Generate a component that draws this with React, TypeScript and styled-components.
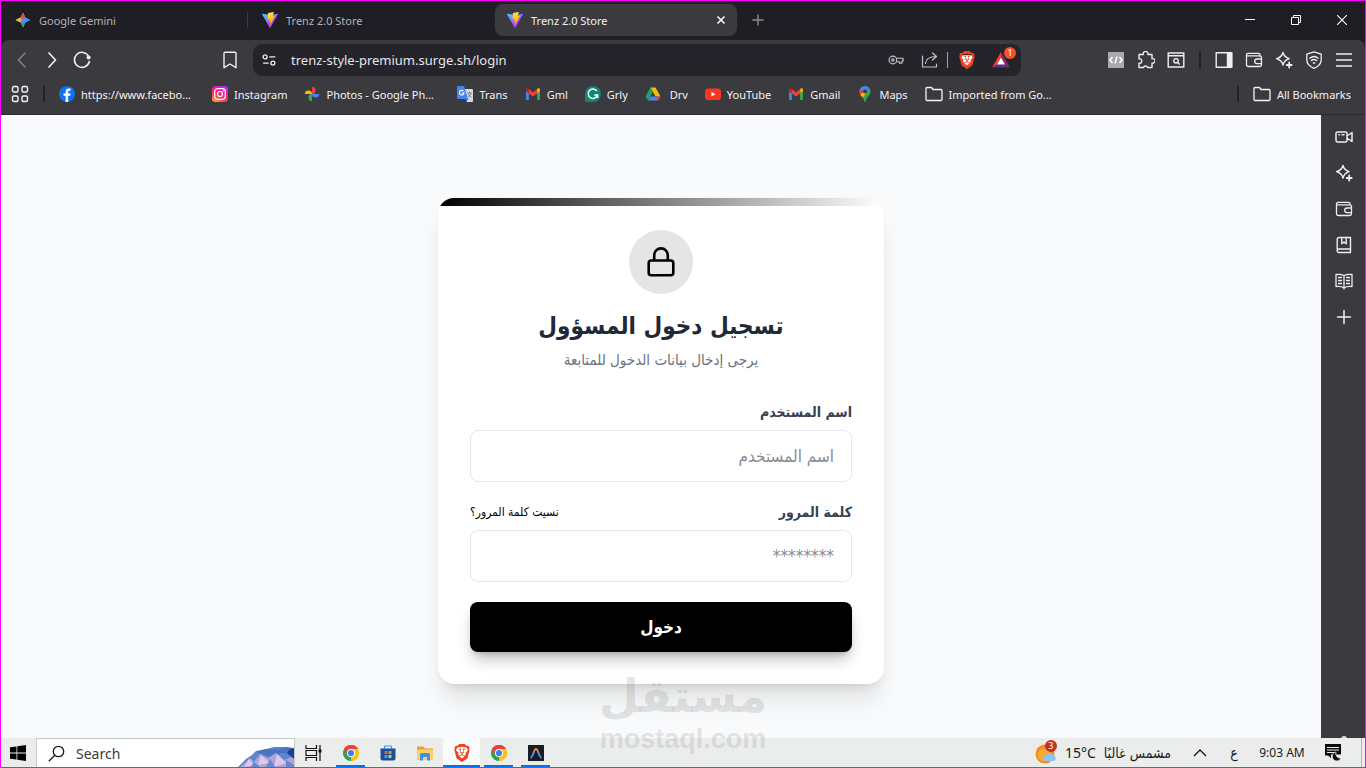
import React from "react";
import styled, { createGlobalStyle, css } from "styled-components";
import { SiBrave } from "react-icons/si";

const UI = '"Noto Sans", "Open Sans", sans-serif';
const ARABIC = '"DejaVu Sans Condensed", "DejaVu Sans", sans-serif';

const GlobalStyle = createGlobalStyle`
  *, *::before, *::after { box-sizing: border-box; }
  body { margin: 0; font-family: ${UI}; }
  button, input { font: inherit; margin: 0; }
  button { border: 0; padding: 0; background: none; color: inherit; cursor: pointer; }
  a { color: inherit; text-decoration: none; }
  svg { display: block; flex: none; }
`;

/* ---------- frame ---------- */

const Screen = styled.div`
  position: relative;
  display: flex;
  flex-direction: column;
  min-height: 100vh;
  border: 1px solid #ff00ff;
  background: #1f1e24;
  overflow: hidden;
`;

const TabStrip = styled.header`
  display: flex;
  height: 39px;
  padding-bottom: 1px;
  background: #1f1e24;
  color: #b4b3b9;
`;

const TabList = styled.nav`
  display: flex;
  align-items: center;
`;

const Tab = styled.button<{ $active?: boolean; $divided?: boolean }>`
  position: relative;
  display: flex;
  align-items: center;
  gap: 8px;
  width: 247px;
  height: 32px;
  padding: 0 10px 0 14px;
  font-size: 11px;
  text-align: left;
  ${(p) =>
    p.$active &&
    css`
      width: 242px;
      padding-left: 12px;
      border-radius: 8px;
      background: #3b3a3f;
      color: #f2f2f4;
    `}
  ${(p) =>
    p.$divided &&
    css`
      &::after {
        content: "";
        position: absolute;
        right: 0;
        top: 8px;
        width: 1px;
        height: 16px;
        background: #3b3a40;
      }
    `}
`;

const TabTitle = styled.span`
  flex: 1;
`;

const NewTab = styled.button`
  display: grid;
  place-items: center;
  width: 42px;
  height: 32px;
`;

const WindowControls = styled.div`
  display: flex;
  margin-left: auto;
`;

const WindowButton = styled.button`
  display: grid;
  place-items: center;
  width: 46px;
  color: #fff;
`;

const Toolbar = styled.div`
  display: grid;
  grid-template-columns: 244px 1fr 344px;
  align-items: center;
  height: 40px;
  border-radius: 8px 8px 0 0;
  background: #3b3a3f;
  color: #eeeef0;
`;

const ToolGroup = styled.div<{ $end?: boolean }>`
  display: flex;
  align-items: center;
  justify-content: ${(p) => (p.$end ? "flex-end" : "flex-start")};
  padding: ${(p) => (p.$end ? "0 6px 0 0" : "0 0 0 6px")};
`;

const ToolButton = styled.button<{ $dim?: boolean; $push?: boolean }>`
  display: grid;
  place-items: center;
  width: 30px;
  height: 30px;
  color: ${(p) => (p.$dim ? "#85848a" : "inherit")};
  margin-left: ${(p) => (p.$push ? "auto" : "0")};
`;

const Rule = styled.span`
  width: 2px;
  height: 16px;
  margin: 0 8px;
  background: #232228;
`;

const BookmarkRule = styled(Rule)`
  margin: 0 14px;
`;

const AddressBar = styled.div`
  display: flex;
  align-items: center;
  height: 32px;
  margin-left: 8px;
  padding: 0 5px 0 1px;
  border-radius: 9px;
  background: #25242a;
`;

const AddressInput = styled.input`
  flex: 1;
  min-width: 0;
  padding: 0 0 0 7px;
  border: 0;
  outline: 0;
  background: none;
  color: #e6e6ea;
  font-size: 13px;
`;

const AddressActions = styled.div`
  display: flex;
  align-items: center;
  gap: 4px;
  color: #c3c2c8;
`;

const AddressRule = styled.span`
  width: 1px;
  height: 16px;
  margin: 0 4px 0 2px;
  background: #a2a1a7;
`;

const BadgeHost = styled.button`
  position: relative;
  display: grid;
  place-items: center;
  width: 30px;
  height: 30px;
  margin-left: 4px;
`;

const Badge = styled.span`
  position: absolute;
  top: 2px;
  right: 0;
  width: 12px;
  height: 12px;
  border-radius: 50%;
  background: #f4512c;
  color: #fff;
  font-size: 9px;
  line-height: 12px;
  text-align: center;
`;

const BookmarksBar = styled.nav`
  display: flex;
  align-items: center;
  height: 35px;
  padding: 0 14px 6px 10px;
  border-bottom: 1px solid #2b2a30;
  background: #3b3a3f;
  color: #f4f4f6;
  font-size: 11px;
  white-space: nowrap;
`;

const Bookmark = styled.a`
  display: flex;
  align-items: center;
  gap: 6px;
  margin-right: 17px;
`;

const BookmarkLabel = styled.span<{ $full?: boolean }>`
  min-width: ${(p) => (p.$full ? "114px" : "0")};
`;

const AllBookmarks = styled.button`
  display: flex;
  align-items: center;
  gap: 6px;
`;

const BarSpace = styled.span`
  flex: 1;
`;

const Body = styled.div`
  display: flex;
  flex: 1;
  min-height: 0;
`;

const Sidebar = styled.aside`
  display: flex;
  flex-direction: column;
  align-items: center;
  width: 44px;
  padding: 4px 0 0 2px;
  background: #3b3a3f;
  color: #eeeef0;
`;

const SideButton = styled.button`
  display: grid;
  place-items: center;
  width: 36px;
  height: 36px;
`;

const SettingsPeek = styled.button`
  height: 2px;
  margin-top: auto;
  overflow: hidden;
`;

/* ---------- login page ---------- */

const Page = styled.main`
  display: flex;
  flex: 1;
  align-items: center;
  justify-content: center;
  padding: 83px 16px 54px;
  background: #f9fafb;
  font-family: ${ARABIC};
`;

const Card = styled.section`
  width: 100%;
  max-width: 446px;
  border-radius: 16px;
  background: #fff;
  overflow: hidden;
  box-shadow: 0 20px 25px -5px rgba(0, 0, 0, 0.1), 0 8px 10px -6px rgba(0, 0, 0, 0.1),
    0 0 1px rgba(0, 0, 0, 0.12);
`;

const CardStripe = styled.div`
  height: 8px;
  background: linear-gradient(to right, #000, #fff);
`;

const CardBody = styled.div`
  display: flex;
  flex-direction: column;
  align-items: center;
  padding: 24px 32px 32px;
`;

const LockDisc = styled.div`
  display: grid;
  place-items: center;
  width: 64px;
  height: 64px;
  border-radius: 50%;
  background: #e5e5e5;
`;

const Title = styled.h1`
  margin: 16px 0 0;
  color: #1f2937;
  font-size: 24px;
  font-weight: 700;
  line-height: 32px;
`;

const Subtitle = styled.p`
  margin: 8px 0 0;
  color: #6b7280;
  font-size: 15px;
  line-height: 20px;
`;

const Form = styled.form`
  display: flex;
  flex-direction: column;
  gap: 20px;
  width: 100%;
  margin-top: 32px;
`;

const Field = styled.div`
  display: flex;
  flex-direction: column;
  gap: 8px;
`;

const FieldHead = styled.div`
  display: flex;
  align-items: center;
  justify-content: space-between;
  height: 20px;
`;

const Label = styled.label`
  color: #374151;
  font-size: 14px;
  font-weight: 700;
`;

const Forgot = styled.a`
  color: #000;
  font-size: 12px;
`;

const TextInput = styled.input`
  width: 100%;
  height: 52px;
  padding: 0 17px;
  border: 1px solid #e5e7eb;
  border-radius: 8px;
  outline: 0;
  background: #fff;
  font-size: 17px;
  &::placeholder {
    color: #868c96;
    opacity: 1;
  }
`;

const Submit = styled.button`
  height: 50px;
  border-radius: 8px;
  background: #000;
  color: #fff;
  font-size: 17px;
  font-weight: 700;
  box-shadow: 0 10px 15px -3px rgba(0, 0, 0, 0.25), 0 4px 6px -4px rgba(0, 0, 0, 0.25);
`;

/* ---------- taskbar ---------- */

const Taskbar = styled.footer`
  display: flex;
  height: 29px;
  background: #ebedec;
  color: #1a1a1a;
`;

const StartButton = styled.button`
  display: grid;
  place-items: center;
  width: 35px;
  padding-right: 2px;
`;

const SearchBox = styled.label`
  display: flex;
  align-items: center;
  width: 259px;
  padding-left: 11px;
  border: 1px solid #c6c9cc;
  border-bottom: 0;
  background: #fff;
`;

const SearchInput = styled.input`
  flex: 1;
  min-width: 0;
  padding: 0 0 0 11px;
  border: 0;
  outline: 0;
  background: none;
  font-size: 14px;
  &::placeholder {
    color: #3a3a3a;
    opacity: 1;
  }
`;

const TaskButton = styled.button<{ $state?: "open" | "active" }>`
  position: relative;
  display: grid;
  place-items: center;
  width: 37px;
  background: ${(p) => (p.$state === "active" ? "#fafbfb" : "none")};
  ${(p) =>
    p.$state &&
    css`
      &::after {
        content: "";
        position: absolute;
        left: ${p.$state === "active" ? "0" : "4px"};
        right: ${p.$state === "active" ? "0" : "4px"};
        bottom: 0;
        height: 2px;
        background: #0b6fe8;
      }
    `}
`;

const Tray = styled.div`
  display: flex;
  align-items: center;
  margin-left: auto;
  font-size: 12px;
`;

const WeatherButton = styled.button`
  position: relative;
  display: flex;
  align-items: center;
  gap: 8px;
  margin-right: 10px;
  font-size: 14px;
`;

const WeatherBadge = styled.span`
  position: absolute;
  left: 10px;
  top: -2px;
  width: 12px;
  height: 12px;
  border-radius: 50%;
  background: #c4321c;
  color: #fff;
  font-size: 9px;
  line-height: 12px;
  text-align: center;
`;

const WeatherText = styled.span`
  display: flex;
  align-items: baseline;
  gap: 8px;
`;

const ArabicText = styled.span`
  font-family: ${ARABIC};
  font-size: 14px;
`;

const TrayButton = styled.button<{ $w: number }>`
  display: grid;
  place-items: center;
  width: ${(p) => p.$w}px;
  height: 29px;
`;

const DesktopEdge = styled.span`
  align-self: stretch;
  width: 4px;
  margin-left: 10px;
  border-left: 1px solid #b5b7b6;
`;

const Watermark = styled.div`
  position: absolute;
  left: 50%;
  bottom: 14px;
  display: flex;
  flex-direction: column;
  align-items: center;
  transform: translateX(-50%);
  color: rgba(120, 125, 125, 0.2);
  font-weight: 700;
  pointer-events: none;
`;

const WatermarkArabic = styled.span`
  font-family: "DejaVu Sans", sans-serif;
  font-size: 46px;
  line-height: 58px;
`;

const WatermarkLatin = styled.span`
  font-family: "Liberation Sans", sans-serif;
  font-size: 27px;
  line-height: 28px;
`;

/* ---------- icons ---------- */

type LineProps = { size?: number; w?: number; children: React.ReactNode };
const Line = ({ size = 18, w = 1.4, children }: LineProps) => (
  <svg
    width={size}
    height={size}
    viewBox="0 0 18 18"
    fill="none"
    stroke="currentColor"
    strokeWidth={w}
    strokeLinecap="round"
    strokeLinejoin="round"
    aria-hidden
  >
    {children}
  </svg>
);

const GeminiIcon = () => (
  <svg width="16" height="16" viewBox="0 0 16 16" aria-hidden>
    <path d="M8 .5 10.500 5.500 15.500 8 10.500 10.500 8 15.500 5.500 10.500 .5 8 5.500 5.500Z" fill="#4a93f3" />
    <path d="M8 .5 10.300 5.200 8 6.500 5 6.500Z" fill="#ea4a3b" />
    <path d="M.5 8 5.500 5.500 6.500 6.500 5.500 10.500Z" fill="#f6b92b" />
    <path d="M8 15.500 5.500 10.500 7 10 9.500 12.500Z" fill="#35a65c" />
  </svg>
);

const ViteIcon = ({ id }: { id: string }) => (
  <svg width="16" height="16" viewBox="0 0 256 257" aria-hidden>
    <defs>
      <linearGradient id={`${id}a`} x1="-.8%" x2="57.600%" y1="7.600%" y2="78.400%">
        <stop offset="0" stopColor="#41D1FF" />
        <stop offset="1" stopColor="#BD34FE" />
      </linearGradient>
      <linearGradient id={`${id}b`} x1="43.400%" x2="50.300%" y1="2.200%" y2="89%">
        <stop offset="0" stopColor="#FFEA83" />
        <stop offset=".08" stopColor="#FFDD35" />
        <stop offset="1" stopColor="#FFA800" />
      </linearGradient>
    </defs>
    <path
      fill={`url(#${id}a)`}
      d="M255.153 37.938L134.897 252.976c-2.483 4.440-8.862 4.466-11.382.048L.875 37.958c-2.746-4.814 1.371-10.646 6.827-9.670l120.385 21.517a6.537 6.537 0 0 0 2.322-.004l117.867-21.483c5.438-.991 9.574 4.796 6.877 9.620Z"
    />
    <path
      fill={`url(#${id}b)`}
      d="M185.432.063L96.440 17.501a3.268 3.268 0 0 0-2.634 3.014l-5.474 92.456a3.268 3.268 0 0 0 3.997 3.378l24.777-5.718c2.318-.535 4.413 1.507 3.936 3.838l-7.361 36.047c-.495 2.426 1.782 4.500 4.151 3.780l15.304-4.649c2.372-.720 4.652 1.360 4.150 3.788l-11.698 56.621c-.732 3.542 3.979 5.473 5.943 2.437l1.313-2.028l72.516-144.720c1.215-2.423-.880-5.186-3.540-4.672l-25.505 4.922c-2.396.462-4.435-1.770-3.759-4.114l16.646-57.705c.677-2.350-1.370-4.583-3.769-4.113Z"
    />
  </svg>
);

const LionMark = styled.span<{ $size: number }>`
  display: grid;
  width: ${(p) => p.$size}px;
  height: ${(p) => p.$size}px;
  color: #f1421f;
  > svg {
    grid-area: 1 / 1;
  }
`;

const BraveIcon = ({ size = 18 }: { size?: number }) => (
  <LionMark $size={size}>
    <svg width={size} height={size} viewBox="0 0 24 24" aria-hidden>
      <path d="M6 5.500h12l2.500 4-3 8L12 22l-5.500-4.500-3-8Z" fill="#fff" />
    </svg>
    <SiBrave size={size} aria-hidden />
  </LionMark>
);

const BatIcon = () => (
  <svg width="18" height="18" viewBox="0 0 18 18" aria-hidden>
    <path d="M9 1 0 16.500 5 13.500 9 6.500Z" fill="#f4402c" />
    <path d="M9 1 18 16.500 13 13.500 9 6.500Z" fill="#8d2a63" />
    <path d="M0 16.500H18L13 13.500H5Z" fill="#5f2d91" />
    <path d="M9 6.500 13 13.500H5Z" fill="#fff" />
  </svg>
);

const LeoIcon = () => (
  <Line>
    <path d="M8 1.500c.9 3.600 2.300 5 6.200 6.100-3.900 1.200-5.300 2.600-6.200 6.400C7.100 10.200 5.700 8.800 1.500 7.600 5.700 6.500 7.100 5.100 8 1.500Z" />
    <path d="M14.200 11.500v5M11.700 14h5" strokeWidth="1.800" />
  </Line>
);

const WalletIcon = () => (
  <Line w={1.3}>
    <path d="M1.500 5.500V4a1.700 1.700 0 0 1 1.700-1.700h10.300a1.500 1.500 0 0 1 1.500 1.500v1.400M1.500 4.800h13.200a1.800 1.800 0 0 1 1.800 1.800v7.200a1.700 1.700 0 0 1-1.700 1.700H3.200a1.700 1.700 0 0 1-1.700-1.700V4.800M16.500 8H12a2.300 2.300 0 0 0 0 4.600h4.500" />
  </Line>
);

const FolderIcon = () => (
  <Line w={1.3}>
    <path d="M1 14.500V3.500a1 1 0 0 1 1-1h4.500l1.500 2h8a1 1 0 0 1 1 1v9a1 1 0 0 1-1 1H2a1 1 0 0 1-1-1Z" />
  </Line>
);

const FacebookIcon = () => (
  <svg width="16" height="16" viewBox="0 0 16 16" aria-hidden>
    <circle cx="8" cy="8" r="8" fill="#0b73ee" />
    <path d="M9.200 16V9.800h2l.4-2.400H9.200V6c0-.7.3-1.300 1.300-1.300h1.100V2.600s-.9-.2-1.900-.2c-2 0-3.100 1.200-3.100 3.300v1.700H4.500v2.400h2.100V16Z" fill="#fff" />
  </svg>
);

const InstagramIcon = () => (
  <svg width="16" height="16" viewBox="0 0 16 16" aria-hidden>
    <defs>
      <linearGradient id="insta" x1="0.100" y1="1" x2="0.700" y2="0">
        <stop offset="0" stopColor="#ffb52b" />
        <stop offset=".35" stopColor="#ff3d4e" />
        <stop offset=".7" stopColor="#f0169b" />
        <stop offset="1" stopColor="#b52df0" />
      </linearGradient>
    </defs>
    <rect width="16" height="16" rx="3.500" fill="url(#insta)" />
    <rect x="2.700" y="2.700" width="10.600" height="10.600" rx="3" fill="none" stroke="#fff" strokeWidth="1.200" />
    <circle cx="8" cy="8" r="2.500" fill="none" stroke="#fff" strokeWidth="1.200" />
    <circle cx="11.200" cy="4.900" r=".7" fill="#fff" />
  </svg>
);

const PhotosIcon = () => (
  <svg width="16" height="16" viewBox="0 0 16 16" aria-hidden>
    <path d="M8 8V.8a3.600 3.600 0 0 1 0 7.200Z" fill="#ea4335" />
    <path d="M8 8h7.200a3.600 3.600 0 0 1-7.200 0Z" fill="#4285f4" />
    <path d="M8 8v7.200a3.600 3.600 0 0 1 0-7.200Z" fill="#34a853" />
    <path d="M8 8H.8a3.600 3.600 0 0 1 7.200 0Z" fill="#fbbc04" />
  </svg>
);

const TranslateIcon = () => (
  <svg width="16" height="16" viewBox="0 0 16 16" aria-hidden>
    <path d="M6 3h9a1 1 0 0 1 1 1v11a1 1 0 0 1-1 1H9.500Z" fill="#d5d7da" />
    <path d="M8 13h3l-1.700 3Z" fill="#2d5fc4" />
    <path d="M1 0h6l4 13H1a1 1 0 0 1-1-1V1a1 1 0 0 1 1-1Z" fill="#4285f4" />
    <path d="M6.500 5.200A2.300 2.300 0 1 0 7 7H4.800" fill="none" stroke="#fff" strokeWidth="1.100" />
    <path d="M10.500 7h4M12.500 6v1M14 7c-.4 1.800-1.500 3-2.800 4M11.400 8.300c.6 1.200 1.700 2.200 2.900 2.900" fill="none" stroke="#6a7078" strokeWidth=".9" />
  </svg>
);

const GmailIcon = () => (
  <svg width="16" height="16" viewBox="0 0 16 16" aria-hidden>
    <path d="M1 5v8a1 1 0 0 0 1 1h1.900V7.300Z" fill="#4285f4" />
    <path d="M15 5v8a1 1 0 0 1-1 1h-1.900V7.300Z" fill="#34a853" />
    <path d="M12.100 4.200v3.300L15 5.100V4c0-1.500-1.400-2.200-2.500-1.400Z" fill="#fbbc04" />
    <path d="M1 4v1.100l2.900 2.400V4.200l-.5-1.600C2.300 1.800 1 2.500 1 4Z" fill="#c5221f" />
    <path d="M3.800 7.500V3.100L8 6.200l4.200-3.100v4.400L8 10.600Z" fill="#ea4335" />
  </svg>
);

const GrammarlyIcon = () => (
  <svg width="16" height="16" viewBox="0 0 16 16" aria-hidden>
    <path d="M8 0a8 8 0 1 1 0 16H0V8a8 8 0 0 1 8-8Z" fill="#0f8672" />
    <path d="M11.800 5A4.700 4.700 0 1 0 12.500 9H9.300M12.600 9v3" fill="none" stroke="#fff" strokeWidth="1.500" />
  </svg>
);

const DriveIcon = () => (
  <svg width="16" height="16" viewBox="0 0 16 16" aria-hidden>
    <path d="M5.500 1.500h5l5 9h-5Z" fill="#fbbc04" />
    <path d="M5.500 1.500 8 6 3 14.500.5 10.500Z" fill="#1fa463" />
    <path d="M5.300 10.500h10.200L13 14.500H3Z" fill="#4285f4" />
    <path d="M10.500 10.500h5L13 14.500Z" fill="#ea4335" />
  </svg>
);

const YouTubeIcon = () => (
  <svg width="16" height="16" viewBox="0 0 16 16" aria-hidden>
    <rect y="2.500" width="16" height="11.500" rx="3" fill="#fb3523" />
    <path d="M6.500 5.900v4.700L10.500 8.250Z" fill="#fff" />
  </svg>
);

const MapsIcon = () => (
  <svg width="16" height="16" viewBox="0 0 16 16" aria-hidden>
    <defs>
      <clipPath id="maps-pin">
        <path d="M8 0a5.600 5.600 0 0 1 5.600 5.600C13.600 9.500 9.300 11 8.700 15.300 8.600 16.200 7.400 16.200 7.300 15.300 6.700 11 2.400 9.500 2.400 5.600A5.600 5.600 0 0 1 8 0Z" />
      </clipPath>
    </defs>
    <g clipPath="url(#maps-pin)">
      <path d="M0 0h16v16H0Z" fill="#34a853" />
      <path d="M2 8 8 2 10 6 5 12H2Z" fill="#fbbc04" />
      <path d="M2 1.500 7 5.500 2 10Z" fill="#ea4335" />
      <path d="M2 2 6 0h8v2L8 7 3.500 3.500Z" fill="#4285f4" />
    </g>
    <circle cx="8" cy="5.600" r="2" fill="#3b3a3f" />
  </svg>
);

const ChromeIcon = () => (
  <svg width="16" height="16" viewBox="0 0 16 16" aria-hidden>
    <path d="M8 8 1.070 4A8 8 0 0 1 14.930 4Z" fill="#ea4335" />
    <path d="M8 8 14.930 4A8 8 0 0 1 8 16Z" fill="#fbc116" />
    <path d="M8 8 8 16A8 8 0 0 1 1.070 4Z" fill="#2fa24f" />
    <path d="M8 4h6.930A8 8 0 0 1 8 16l3.460-6Z" fill="#fbc116" />
    <path d="M8 4h6.930A8 8 0 0 0 1.070 4l3.470 6Z" fill="#ea4335" />
    <circle cx="8" cy="8" r="4" fill="#fff" />
    <circle cx="8" cy="8" r="3.100" fill="#3f7fe8" />
  </svg>
);

const StoreIcon = () => (
  <svg width="16" height="16" viewBox="0 0 16 16" aria-hidden>
    <path d="M4.500 4V1.800a.8.8 0 0 1 .8-.8h5.400a.8.8 0 0 1 .8.8V4" fill="none" stroke="#3c9be0" strokeWidth="1.200" />
    <path d="M.5 3.500h15v10a2 2 0 0 1-2 2h-11a2 2 0 0 1-2-2Z" fill="#1d4e9c" />
    <path d="M4.500 6h3v3h-3Z" fill="#ef5b3c" />
    <path d="M8.500 6h3v3h-3Z" fill="#7fbf45" />
    <path d="M4.500 10h3v3h-3Z" fill="#35a4ea" />
    <path d="M8.500 10h3v3h-3Z" fill="#fcbc2b" />
  </svg>
);

const ExplorerIcon = () => (
  <svg width="16" height="16" viewBox="0 0 16 16" aria-hidden>
    <path d="M0 1.500h6.500L8 3.500h8v11H0Z" fill="#e9a02c" />
    <path d="M0 4.500h16v10H0Z" fill="#fdd067" />
    <path d="M3 15.500V9.500a1.500 1.500 0 0 1 1.500-1.500h7A1.500 1.500 0 0 1 13 9.500v6h-3V12H6v3.500Z" fill="#3a92e8" />
  </svg>
);

const ArchIcon = () => (
  <svg width="16" height="16" viewBox="0 0 16 16" aria-hidden>
    <defs>
      <linearGradient id="arch" x1="0" y1="0" x2="0" y2="1">
        <stop offset="0" stopColor="#f08a3c" />
        <stop offset=".5" stopColor="#5b8fd8" />
        <stop offset="1" stopColor="#3d7ff0" />
      </linearGradient>
    </defs>
    <path d="M0 0h16v16H0Z" fill="#1b1c22" />
    <path d="M3 12.500C5.500 11 5.800 4 8 4s2.500 7 5 8.500" fill="none" stroke="url(#arch)" strokeWidth="1.900" strokeLinecap="round" />
  </svg>
);

const MountainArt = () => (
  <svg width="58" height="28" viewBox="0 0 58 28" aria-hidden>
    <path d="M2 28 10 20 16 16 20 12 30 10 38 8 50 8 58 9V28Z" fill="#5a86cf" />
    <path d="M20 13 30 10 42 11 50 8 58 10V15L46 14 34 18Z" fill="#4a72bf" />
    <path d="M4 28 14 19 18 23 24 15 32 19 40 14 48 21 58 17V28Z" fill="#a9a5dd" />
    <path d="M13 20 18 26 8 28ZM25 16 34 24 22 26ZM41 15 50 24 38 28Z" fill="#e3c7e6" />
    <path d="M18 23 24 28H15ZM34 20 39 28H30ZM50 21 58 26V28H50Z" fill="#6f84c8" />
    <path d="M54 10 58 9V20L51 14Z" fill="#1e3f93" />
  </svg>
);

const bookmarks: { label: string; icon: React.ReactNode; full?: boolean }[] = [
  { label: "https://www.facebo...", icon: <FacebookIcon />, full: true },
  { label: "Instagram", icon: <InstagramIcon /> },
  { label: "Photos - Google Ph...", icon: <PhotosIcon />, full: true },
  { label: "Trans", icon: <TranslateIcon /> },
  { label: "Gml", icon: <GmailIcon /> },
  { label: "Grly", icon: <GrammarlyIcon /> },
  { label: "\u00a0Drv", icon: <DriveIcon /> },
  { label: "YouTube", icon: <YouTubeIcon /> },
  { label: "Gmail", icon: <GmailIcon /> },
  { label: "Maps", icon: <MapsIcon /> },
  { label: "Imported from Go...", icon: <FolderIcon /> },
];

/* ---------- sections ---------- */

const Tabs = () => (
  <TabStrip>
    <TabList>
      <Tab $divided>
        <GeminiIcon />
        <TabTitle>Google Gemini</TabTitle>
      </Tab>
      <Tab>
        <ViteIcon id="v1" />
        <TabTitle>Trenz 2.0 Store</TabTitle>
      </Tab>
      <Tab $active>
        <ViteIcon id="v2" />
        <TabTitle>Trenz 2.0 Store</TabTitle>
        <svg width="12" height="12" viewBox="0 0 12 12" stroke="#f4f4f6" strokeWidth="1.700" aria-hidden>
          <path d="M2.500 2.500 9.500 9.500M9.500 2.500 2.500 9.500" />
        </svg>
      </Tab>
      <NewTab aria-label="New tab">
        <svg width="12" height="12" viewBox="0 0 12 12" stroke="#8d8c92" strokeWidth="1.400" aria-hidden>
          <path d="M6 .5V11.500M.5 6H11.500" />
        </svg>
      </NewTab>
    </TabList>
    <WindowControls>
      <WindowButton aria-label="Minimize">
        <svg width="10" height="10" viewBox="0 0 10 10" stroke="#fff" aria-hidden>
          <path d="M0 4.500H10" />
        </svg>
      </WindowButton>
      <WindowButton aria-label="Restore">
        <svg width="10" height="10" viewBox="0 0 10 10" stroke="#fff" fill="none" aria-hidden>
          <path d="M.5 2.500H7.500V9.500H.5ZM2.500 2.500V.5H9.500V7.500H7.500" />
        </svg>
      </WindowButton>
      <WindowButton aria-label="Close">
        <svg width="10" height="10" viewBox="0 0 10 10" stroke="#fff" strokeWidth="1.100" aria-hidden>
          <path d="M0 0 10 10M10 0 0 10" />
        </svg>
      </WindowButton>
    </WindowControls>
  </TabStrip>
);

const Tools = () => (
  <Toolbar>
    <ToolGroup>
      <ToolButton $dim aria-label="Back">
        <Line><path d="M12 2 5.500 9 12 16" /></Line>
      </ToolButton>
      <ToolButton aria-label="Forward">
        <Line w={1.700}><path d="M6 2 12.500 9 6 16" /></Line>
      </ToolButton>
      <ToolButton aria-label="Reload">
        <Line w={1.600}>
          <path d="M15.600 5.300A7.500 7.500 0 1 0 16.300 10.500" />
          <circle cx="15.600" cy="6.500" r="1.300" fill="currentColor" />
        </Line>
      </ToolButton>
      <ToolButton $push aria-label="Bookmark this page">
        <Line><path d="M4 1.200h10a1 1 0 0 1 1 1v14.500L9 13 3 16.700V2.200a1 1 0 0 1 1-1Z" /></Line>
      </ToolButton>
    </ToolGroup>
    <AddressBar>
      <ToolButton aria-label="Site information">
        <Line size={14} w={1.700}>
          <circle cx="4" cy="5" r="2.500" />
          <path d="M10 5h6.500M2 13h6" />
          <circle cx="14" cy="13" r="2.500" />
        </Line>
      </ToolButton>
      <AddressInput aria-label="Address" defaultValue="trenz-style-premium.surge.sh/login" />
      <AddressActions>
        <ToolButton aria-label="Passwords">
          <Line size={16} w={1.300}>
            <circle cx="5.500" cy="9" r="4.300" />
            <circle cx="5.500" cy="9" r="1.300" />
            <path d="M9.500 7H17v3h-1.200v2.500h-3V11H9.500" />
          </Line>
        </ToolButton>
        <ToolButton aria-label="Share">
          <Line size={18} w={1.200}>
            <path d="M1.500 5v11h14v-3M4.500 12.500C5 8 8 5.500 15 5.500M11.500 2 15.500 5.500 11.500 9" />
          </Line>
        </ToolButton>
      </AddressActions>
      <AddressRule />
      <ToolButton aria-label="Brave Shields">
        <BraveIcon />
      </ToolButton>
      <BadgeHost aria-label="Brave Rewards">
        <BatIcon />
        <Badge>1</Badge>
      </BadgeHost>
    </AddressBar>
    <ToolGroup $end>
      <ToolButton aria-label="Source viewer">
        <svg width="16" height="16" viewBox="0 0 16 16" fill="none" stroke="#fff" strokeWidth="1.500" aria-hidden>
          <path d="M0 0h16v16H0Z" fill="#a9a8b0" stroke="none" />
          <path d="M4.500 5 2 8l2.500 3M11.500 5 14 8l-2.500 3M9 4.500 7 11.500" />
        </svg>
      </ToolButton>
      <ToolButton aria-label="Extensions">
        <Line>
          <path d="M2 3.500h4.300a2.400 2.400 0 1 1 4.600 0H15v4.200a2.300 2.300 0 1 1 0 4.400v4.400h-4.300a2.200 2.200 0 0 0-4.200 0H2v-4.200a2.300 2.300 0 1 0 0-4.500Z" />
        </Line>
      </ToolButton>
      <ToolButton aria-label="Find in page">
        <Line>
          <path d="M1.200 2h15.600v14H1.200ZM1.200 4.700h15.600" />
          <circle cx="9" cy="9.800" r="2.200" />
          <path d="M10.700 11.500 12.300 13" />
        </Line>
      </ToolButton>
      <Rule />
      <ToolButton aria-label="Side panel">
        <Line>
          <path d="M1.200 1.800h15.600v14.400H1.200Z" />
          <path d="M12.500 2h4v14h-4Z" fill="currentColor" />
        </Line>
      </ToolButton>
      <ToolButton aria-label="Wallet"><WalletIcon /></ToolButton>
      <ToolButton aria-label="Leo AI"><LeoIcon /></ToolButton>
      <ToolButton aria-label="VPN">
        <Line w={1.300}>
          <path d="M9 .8 16.200 3.200v5.600c0 4-2.700 6.700-7.200 8.500-4.500-1.800-7.200-4.500-7.200-8.500V3.200Z" />
          <path d="M4.800 7.200c2.500-2 5.900-2 8.400 0M6.300 9.600c1.600-1.300 3.800-1.300 5.400 0M8.300 12h1.400" />
        </Line>
      </ToolButton>
      <ToolButton aria-label="Menu">
        <Line><path d="M1.500 3h15M1.500 9h15M1.500 15h15" /></Line>
      </ToolButton>
    </ToolGroup>
  </Toolbar>
);

const Bookmarks = () => (
  <BookmarksBar>
    <button aria-label="Apps">
      <Line>
        <rect x="1.500" y="1.500" width="5.500" height="5.500" rx="1.500" />
        <rect x="11" y="1.500" width="5.500" height="5.500" rx="1.500" />
        <rect x="1.500" y="11" width="5.500" height="5.500" rx="1.500" />
        <rect x="11" y="11" width="5.500" height="5.500" rx="1.500" />
      </Line>
    </button>
    <BookmarkRule />
    {bookmarks.map((b, i) => (
      <Bookmark key={i} href="#">
        {b.icon}
        <BookmarkLabel $full={b.full}>{b.label}</BookmarkLabel>
      </Bookmark>
    ))}
    <BarSpace />
    <BookmarkRule />
    <AllBookmarks>
      <FolderIcon />
      All Bookmarks
    </AllBookmarks>
  </BookmarksBar>
);

const Login = () => (
  <Page dir="rtl" lang="ar">
    <Card>
      <CardStripe />
      <CardBody>
        <LockDisc>
          <svg width="32" height="32" viewBox="0 0 32 32" fill="none" stroke="#000" strokeWidth="2.600" aria-hidden>
            <rect x="3.700" y="14.500" width="24.600" height="14.700" rx="2.500" />
            <path d="M9.200 14.500V9.200a6.800 6.800 0 0 1 13.600 0v5.300" />
          </svg>
        </LockDisc>
        <Title>تسجيل دخول المسؤول</Title>
        <Subtitle>يرجى إدخال بيانات الدخول للمتابعة</Subtitle>
        <Form onSubmit={(e) => e.preventDefault()}>
          <Field>
            <FieldHead>
              <Label htmlFor="user">اسم المستخدم</Label>
            </FieldHead>
            <TextInput id="user" placeholder="اسم المستخدم" />
          </Field>
          <Field>
            <FieldHead>
              <Label htmlFor="pass">كلمة المرور</Label>
              <Forgot href="#">نسيت كلمة المرور؟</Forgot>
            </FieldHead>
            <TextInput id="pass" type="password" placeholder="********" />
          </Field>
          <Submit type="submit">دخول</Submit>
        </Form>
      </CardBody>
    </Card>
  </Page>
);

const Side = () => (
  <Sidebar>
    <SideButton aria-label="Talk">
      <Line w={1.500}>
        <path d="M2.500 4h8a1.500 1.500 0 0 1 1.500 1.500v7a1.500 1.500 0 0 1-1.500 1.500h-8A1.500 1.500 0 0 1 1 12.500v-7A1.500 1.500 0 0 1 2.500 4ZM12 8l5-3.500v9L12 10M4 6.800h.5M7 6.800h2" />
      </Line>
    </SideButton>
    <SideButton aria-label="Leo AI"><LeoIcon /></SideButton>
    <SideButton aria-label="Wallet"><WalletIcon /></SideButton>
    <SideButton aria-label="Bookmarks">
      <Line>
        <path d="M15.500 13V1.500H4A1.800 1.800 0 0 0 2.200 3.300v11.500A1.700 1.700 0 0 0 4 16.500h11.500M15.500 13H4a1.800 1.800 0 0 0-1.800 1.800M15.500 13v3.500M6.800 1.800v6L9 6l2.200 1.800v-6" />
      </Line>
    </SideButton>
    <SideButton aria-label="Reading list">
      <Line w={1.300}>
        <path d="M9 3.500C7 2.500 4 2.200 1 2.500v12c3-.3 6 0 8 1.500 2-1.500 5-1.800 8-1.500v-12c-3-.3-6 0-8 1ZM9 3.500V17M3.500 5.500h3M3.500 8.500h3M3.500 11.500h3M11.500 5.500h3M11.500 8.500h3M11.500 11.500h3" />
      </Line>
    </SideButton>
    <SideButton aria-label="Add">
      <Line w={1.500}><path d="M9 2.500v13M2.500 9h13" /></Line>
    </SideButton>
    <SettingsPeek aria-label="Settings">
      <Line><circle cx="9" cy="3" r="2.300" /></Line>
    </SettingsPeek>
  </Sidebar>
);

const Tasks = () => (
  <Taskbar>
    <StartButton aria-label="Start">
      <svg width="16" height="16" viewBox="0 0 16 16" aria-hidden>
        <path d="M0 2.300 6.500 1.400V7.600H0ZM7.300 1.300 16 0V7.600H7.300ZM0 8.400H6.500V14.600L0 13.700ZM7.300 8.400H16V16L7.300 14.700Z" />
      </svg>
    </StartButton>
    <SearchBox>
      <svg width="17" height="17" viewBox="0 0 17 17" fill="none" stroke="#1a1a1a" strokeWidth="1.300" aria-hidden>
        <circle cx="10.500" cy="6.500" r="5.200" />
        <path d="M6.800 10.200 .8 16.200" />
      </svg>
      <SearchInput aria-label="Search" placeholder="Search" />
      <MountainArt />
    </SearchBox>
    <TaskButton aria-label="Task view">
      <svg width="17" height="16" viewBox="0 0 17 16" fill="none" stroke="#111" strokeWidth="1.200" aria-hidden>
        <path d="M1 0V3.500H11.500V0M1 16V12.500H11.500V16M1 5.500H11.500V10.500H1ZM15 0V16" />
        <path d="M13.500 4.500h3v3h-3Z" fill="#111" stroke="none" />
      </svg>
    </TaskButton>
    <TaskButton $state="open" aria-label="Chrome"><ChromeIcon /></TaskButton>
    <TaskButton aria-label="Store"><StoreIcon /></TaskButton>
    <TaskButton aria-label="File Explorer"><ExplorerIcon /></TaskButton>
    <TaskButton $state="active" aria-label="Brave"><BraveIcon /></TaskButton>
    <TaskButton $state="open" aria-label="Chrome profile"><ChromeIcon /></TaskButton>
    <TaskButton $state="open" aria-label="Editor"><ArchIcon /></TaskButton>
    <Tray>
      <WeatherButton>
        <svg width="22" height="22" viewBox="0 0 22 22" aria-hidden>
          <circle cx="10" cy="12" r="9.500" fill="#f08c22" />
          <circle cx="9" cy="13" r="6.500" fill="#f7a935" />
          <path d="M11 19a3 3 0 0 1 .3-6 4.200 4.200 0 0 1 7.600 1A2.600 2.600 0 0 1 19 19Z" fill="#8cc3f5" />
        </svg>
        <WeatherBadge>3</WeatherBadge>
        <WeatherText>
          15°C
          <ArabicText dir="rtl">مشمس غالبًا</ArabicText>
        </WeatherText>
      </WeatherButton>
      <TrayButton $w={38} aria-label="Hidden icons">
        <svg width="14" height="8" viewBox="0 0 14 8" fill="none" stroke="#111" strokeWidth="1.300" aria-hidden>
          <path d="M1 7 7 1 13 7" />
        </svg>
      </TrayButton>
      <TrayButton $w={30}><ArabicText>ع</ArabicText></TrayButton>
      <TrayButton $w={66}>9:03 AM</TrayButton>
      <TrayButton $w={36} aria-label="Notifications">
        <svg width="17" height="17" viewBox="0 0 17 17" aria-hidden>
          <path d="M0 0H16V10.500H6V14L3 11.500H0Z" fill="#0c0c0c" />
          <path d="M2 3.500H14M2 6H14M2 8.500H9" stroke="#ebedec" strokeWidth="1" />
          <path d="M11 8a4.500 4.500 0 0 0 5 6A4.500 4.500 0 1 1 11 8Z" fill="#0c0c0c" stroke="#ebedec" strokeWidth=".8" />
        </svg>
      </TrayButton>
      <DesktopEdge />
    </Tray>
  </Taskbar>
);

export default function App() {
  return (
    <>
      <GlobalStyle />
      <Screen>
        <Tabs />
        <Tools />
        <Bookmarks />
        <Body>
          <Login />
          <Side />
        </Body>
        <Tasks />
        <Watermark>
          <WatermarkArabic lang="ar">مستقل</WatermarkArabic>
          <WatermarkLatin>mostaql.com</WatermarkLatin>
        </Watermark>
      </Screen>
    </>
  );
}
